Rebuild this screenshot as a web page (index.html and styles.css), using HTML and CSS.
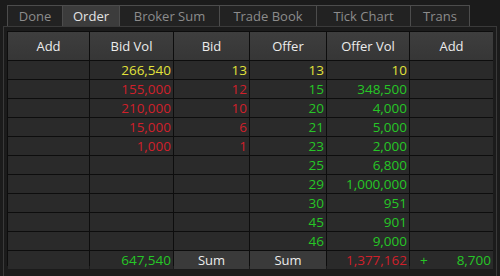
FILE: index.html
```html
<!DOCTYPE html>
<html>
<head>
  <meta charset="utf-8" />
  <title>Order Book</title>
  <link rel="stylesheet" href="styles.css">
</head>
<body>
<div class="app">
  <div class="tabs">
    <div class="tab">Done</div>
    <div class="tab active">Order</div>
    <div class="tab">Broker Sum</div>
    <div class="tab">Trade Book</div>
    <div class="tab">Tick Chart</div>
    <div class="tab">Trans</div>
  </div>
  <div class="panel">
    <div class="book">
      <div class="head">Add</div>
      <div class="head">Bid Vol</div>
      <div class="head">Bid</div>
      <div class="head">Offer</div>
      <div class="head">Offer Vol</div>
      <div class="head">Add</div>

      <div class="cell"></div><div class="cell yellow">266,540</div><div class="cell yellow">13</div><div class="cell yellow">13</div><div class="cell yellow">10</div><div class="cell"></div>
      <div class="cell"></div><div class="cell red">155,000</div><div class="cell red">12</div><div class="cell green">15</div><div class="cell green">348,500</div><div class="cell"></div>
      <div class="cell"></div><div class="cell red">210,000</div><div class="cell red">10</div><div class="cell green">20</div><div class="cell green">4,000</div><div class="cell"></div>
      <div class="cell"></div><div class="cell red">15,000</div><div class="cell red">6</div><div class="cell green">21</div><div class="cell green">5,000</div><div class="cell"></div>
      <div class="cell"></div><div class="cell red">1,000</div><div class="cell red">1</div><div class="cell green">23</div><div class="cell green">2,000</div><div class="cell"></div>
      <div class="cell"></div><div class="cell"></div><div class="cell"></div><div class="cell green">25</div><div class="cell green">6,800</div><div class="cell"></div>
      <div class="cell"></div><div class="cell"></div><div class="cell"></div><div class="cell green">29</div><div class="cell green">1,000,000</div><div class="cell"></div>
      <div class="cell"></div><div class="cell"></div><div class="cell"></div><div class="cell green">30</div><div class="cell green">951</div><div class="cell"></div>
      <div class="cell"></div><div class="cell"></div><div class="cell"></div><div class="cell green">45</div><div class="cell green">901</div><div class="cell"></div>
      <div class="cell"></div><div class="cell"></div><div class="cell"></div><div class="cell green">46</div><div class="cell green">9,000</div><div class="cell"></div>

      <div class="cell"></div>
      <div class="cell green">647,540</div>
      <div class="cell sum">Sum</div>
      <div class="cell sum">Sum</div>
      <div class="cell red">1,377,162</div>
      <div class="cell green split"><span>+</span><span>8,700</span></div>
    </div>
  </div>
</div>
</body>
</html>
```

FILE: styles.css
```css
html, body {
  margin: 0;
  padding: 0;
  background: #1b1b1b;
}

.app {
  width: 500px;
  height: 276px;
  font-family: "Open Sans", "Noto Sans", sans-serif;
  font-size: 12.5px;
  overflow: hidden;
}

.tabs {
  display: flex;
  padding: 5px 0 0 7px;
  height: 26px;
  box-sizing: border-box;
}

.tab {
  box-sizing: border-box;
  border: 1px solid #4c4c4c;
  border-bottom: none;
  background: #222;
  color: #8c8c8c;
  display: flex;
  align-items: center;
  justify-content: center;
  margin-right: -1px;
  font-size: 13px;
}

.tab:nth-child(1) { width: 56px; }
.tab:nth-child(2) { width: 58px; }
.tab:nth-child(3) { width: 101px; }
.tab:nth-child(4) { width: 98px; }
.tab:nth-child(5) { width: 95px; }
.tab:nth-child(6) { width: 60px; }

.tab.active {
  background: #3c3c3c;
  color: #e4e4e4;
}

.panel {
  margin: 0 3px 0 3px;
  border: 1px solid #3a3a3a;
  border-bottom: none;
  padding: 4px 3px 0 3px;
  height: 250px;
  box-sizing: border-box;
}

.book {
  display: grid;
  grid-template-columns: 81px 83px 75px 76px 82px 83px;
  grid-template-rows: 28px repeat(11, 1fr);
  gap: 1px;
  background: #0d0d0d;
  border: 1px solid #0d0d0d;
  height: 235px;
  box-sizing: border-box;
}

.head {
  background: linear-gradient(#3e3e3e, #363636);
  color: #ececec;
  display: flex;
  align-items: center;
  justify-content: center;
  font-size: 13px;
}

.cell {
  background: #2a2a2a;
  display: flex;
  align-items: center;
  justify-content: flex-end;
  padding-right: 2px;
  font-size: 13.5px;
}

.cell.sum {
  background: #3a3a3a;
  color: #ececec;
  justify-content: center;
  padding-right: 0;
  font-size: 13px;
}

.cell.split {
  justify-content: space-between;
  padding-left: 10px;
}

.yellow { color: #e2e23a; }
.red { color: #d0202a; }
.green { color: #26c626; }
```
